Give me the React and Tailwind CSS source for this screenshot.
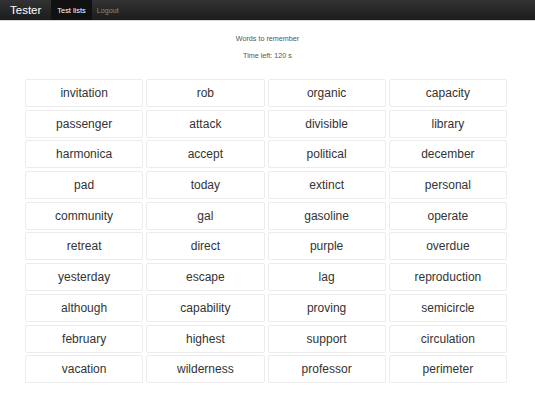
const words = [
  'invitation', 'rob', 'organic', 'capacity',
  'passenger', 'attack', 'divisible', 'library',
  'harmonica', 'accept', 'political', 'december',
  'pad', 'today', 'extinct', 'personal',
  'community', 'gal', 'gasoline', 'operate',
  'retreat', 'direct', 'purple', 'overdue',
  'yesterday', 'escape', 'lag', 'reproduction',
  'although', 'capability', 'proving', 'semicircle',
  'february', 'highest', 'support', 'circulation',
  'vacation', 'wilderness', 'professor', 'perimeter',
];

const App = () => {
  return (
    <div className="min-h-[413px] bg-white font-[family-name:'Liberation_Sans',Arial,sans-serif]">
      {/* Navbar */}
      <header className="h-[21px] bg-gradient-to-b from-[#333333] to-[#1c1c1c] flex items-stretch pl-[10px] border-b border-[#d8d8d8]">
        <span className="text-white text-[11.5px] leading-[21px] mr-[10px]">Tester</span>
        <a className="bg-[#111111] text-white text-[7.4px] leading-[21px] px-[6px] whitespace-nowrap">Test lists</a>
        <a className="text-[#8a8a8a] text-[7.2px] leading-[21px] px-[5px]">Logout</a>
      </header>

      {/* Heading */}
      <div className="flex flex-col items-center text-[#555] text-[7.2px] pt-[13px]">
        <p className="leading-[9px]">Words to remember</p>
        <p className="leading-[9px] mt-[8px]">Time left: 120 s</p>
      </div>

      {/* Words grid */}
      <div className="ml-[25px] mt-[19px] w-[482px] grid grid-cols-4 gap-x-[3px] gap-y-[2.7px]">
        {words.map((w) => (
          <div
            key={w}
            className="h-[28px] flex items-center justify-center border border-[#ececec] rounded-[2px] text-[12px] text-[#333]"
          >
            {w}
          </div>
        ))}
      </div>
    </div>
  );
};

export default App;
